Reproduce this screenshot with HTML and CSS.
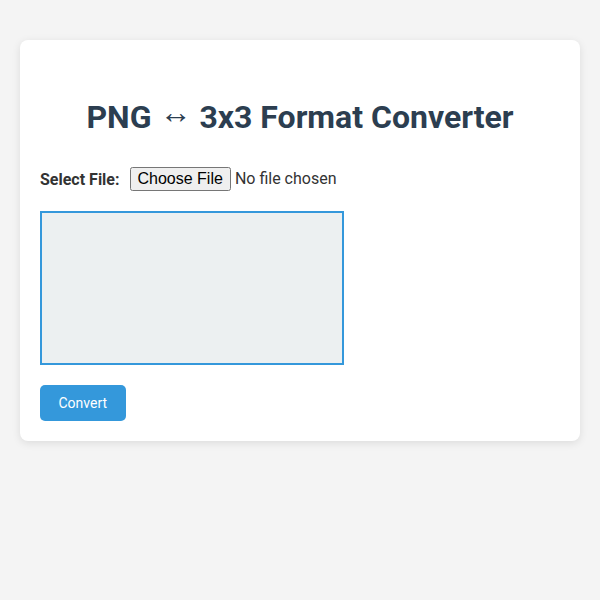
FILE: index.html
```html
<!DOCTYPE html>
<html>
<head>
<meta charset="utf-8">
<link rel="stylesheet" href="styles.css">
</head>
<body>
<div class="card">
  <h1 class="title">PNG <span class="arrow">↔</span> 3x3 Format Converter</h1>
  <div class="file-row">
    <label class="file-label" for="file">Select File:</label>
    <input class="file-input" type="file" id="file">
  </div>
  <canvas class="preview" width="300" height="150"></canvas>
  <div class="actions">
    <button class="convert-btn">Convert</button>
  </div>
</div>
</body>
</html>
```

FILE: styles.css
```css
html, body {
  margin: 0;
  padding: 0;
  background: #f4f4f4;
}
body {
  padding: 40px 20px 20px;
  font-family: Roboto, "Liberation Sans", sans-serif;
  color: #333;
}
.card {
  background: #fff;
  border-radius: 8px;
  box-shadow: 0 2px 8px rgba(0, 0, 0, 0.1);
  padding: 20px;
}
.title {
  margin: 38px 0 31px;
  text-align: center;
  font-size: 32px;
  font-weight: 700;
  color: #2c3e50;
}
.arrow {
  line-height: 0;
  vertical-align: 5px;
}
.file-row {
  display: flex;
  align-items: center;
  margin: 0 0 20px;
}
.file-label {
  font-weight: 700;
  font-size: 16px;
  margin-right: 10px;
}
.file-input {
  font-family: Roboto, "Liberation Sans", sans-serif;
  font-size: 16px;
}
.preview {
  display: block;
  width: 300px;
  height: 150px;
  border: 2px solid #3498db;
  background: #ecf0f1;
}
.actions {
  margin-top: 20px;
}
.convert-btn {
  background: #3498db;
  color: #fff;
  border: none;
  border-radius: 5px;
  padding: 10px 18.5px;
  font-family: Roboto, "Liberation Sans", sans-serif;
  font-size: 14px;
  display: block;
}
```
